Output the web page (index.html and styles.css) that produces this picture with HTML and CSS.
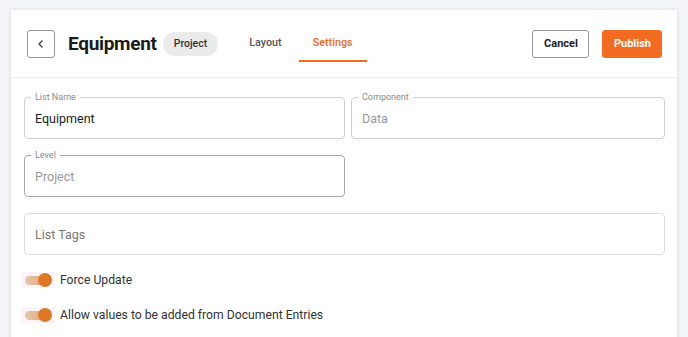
FILE: index.html
```html
<!DOCTYPE html>
<html lang="en">
<head>
    <meta charset="UTF-8">
    <meta name="viewport" content="width=device-width, initial-scale=1.0">
    <title>Equipment - Settings</title>
    <link rel="stylesheet" href="styles.css">
</head>
<body>
    <div class="card">
        <div class="header">
            <button class="back-button">
                <svg width="10" height="10" viewBox="0 0 10 10"><path d="M6.5 1.5 L3 5 L6.5 8.5" fill="none" stroke="#444" stroke-width="1.4"/></svg>
            </button>
            <h1 class="title">Equipment</h1>
            <span class="chip">Project</span>
            <div class="tabs">
                <a class="tab">Layout</a>
                <a class="tab active">Settings</a>
            </div>
            <div class="actions">
                <button class="button cancel">Cancel</button>
                <button class="button publish">Publish</button>
            </div>
        </div>

        <div class="content">
            <div class="field-grid">
                <div class="field">
                    <span class="field-label">List Name</span>
                    <span class="field-value">Equipment</span>
                </div>
                <div class="field">
                    <span class="field-label">Component</span>
                    <span class="field-value muted">Data</span>
                </div>
                <div class="field dark">
                    <span class="field-label">Level</span>
                    <span class="field-value muted">Project</span>
                </div>
            </div>

            <div class="field light">
                <span class="field-value placeholder">List Tags</span>
            </div>

            <div class="toggle-list">
                <div class="toggle-row">
                    <span class="toggle"><span class="track"></span><span class="knob"></span></span>
                    <span class="toggle-text">Force Update</span>
                </div>
                <div class="toggle-row">
                    <span class="toggle"><span class="track"></span><span class="knob"></span></span>
                    <span class="toggle-text">Allow values to be added from Document Entries</span>
                </div>
            </div>
        </div>
    </div>
</body>
</html>
```

FILE: styles.css
```css
body {
    font-family: Roboto, "Liberation Sans", sans-serif;
    background-color: #f3f5f8;
    margin: 0;
    padding: 10px 11px 0 11px;
    color: #222;
}
.card {
    background-color: white;
    box-shadow: 0 0 4px rgba(0, 0, 0, 0.12);
    height: 400px;
}
.header {
    display: flex;
    align-items: center;
    height: 67px;
    padding: 0 15px 0 16px;
    border-bottom: 1px solid #ececec;
}
.back-button {
    width: 28px;
    height: 28px;
    border: 1px solid #9a9a9a;
    border-radius: 3px;
    background: white;
    display: flex;
    align-items: center;
    justify-content: center;
    padding: 0;
    margin-right: 13px;
}
.title {
    font-size: 19px;
    font-weight: 700;
    margin: 0 6px 0 0;
    color: #1c1c1c;
    letter-spacing: -0.3px;
}
.chip {
    background-color: #ebebeb;
    border-radius: 12px;
    height: 24px;
    line-height: 24px;
    padding: 0 11px;
    font-size: 10.5px;
    font-weight: 500;
    color: #333;
}
.tabs {
    display: flex;
    gap: 3px;
    height: 100%;
    margin-left: 17px;
}
.tab {
    display: flex;
    align-items: center;
    padding: 0 14px 2px 14px;
    font-size: 10.8px;
    font-weight: 500;
    color: #555;
    height: 100%;
    box-sizing: border-box;
}
.tab.active {
    color: #f26b21;
    position: relative;
}
.tab.active::after {
    content: "";
    position: absolute;
    left: 0;
    right: 0;
    top: 50px;
    height: 2px;
    background-color: #f26b21;
}
.actions {
    margin-left: auto;
    display: flex;
    gap: 13px;
}
.button {
    height: 28px;
    font-family: inherit;
    font-size: 11px;
    font-weight: 700;
    border-radius: 3px;
    padding: 0 10px 0 11px;
}
.cancel {
    background: white;
    border: 1px solid #9a9a9a;
    color: #222;
}
.publish {
    background-color: #f26b21;
    border: 1px solid #f26b21;
    color: white;
}
.content {
    padding: 19px 12px 0 13px;
}
.field-grid {
    display: grid;
    grid-template-columns: 321px 314px;
    column-gap: 6px;
    row-gap: 16px;
    margin-bottom: 16px;
}
.field {
    position: relative;
    height: 42px;
    box-sizing: border-box;
    border: 1px solid #cfcfcf;
    border-radius: 4px;
    display: flex;
    align-items: center;
    padding-left: 10px;
}
.field.dark {
    border-color: #a9a9a9;
}
.field.light {
    border-color: #dcdcdc;
}
.field-label {
    position: absolute;
    top: -6px;
    left: 6px;
    padding: 0 4px;
    background: white;
    font-size: 9px;
    line-height: 11px;
    color: #8a8a8a;
}
.field-value {
    font-size: 12.5px;
    color: #222;
}
.field-value.muted {
    color: #999;
}
.field-value.placeholder {
    color: #777;
}
.toggle-list {
    padding-top: 7px;
}
.toggle-row {
    display: flex;
    align-items: center;
    height: 35px;
    font-size: 12.2px;
    color: #333;
}
.toggle {
    position: relative;
    width: 28px;
    height: 16px;
    margin-left: -3px;
    padding: 0 3px;
    background: rgba(255, 170, 210, 0.14);
}
.track {
    position: absolute;
    left: 4px;
    top: 4px;
    width: 22px;
    height: 9px;
    border-radius: 5px;
    background: linear-gradient(90deg, #dccda8, #f39a7c);
}
.knob {
    position: absolute;
    left: 17px;
    top: 1px;
    width: 14px;
    height: 14px;
    border-radius: 50%;
    background: radial-gradient(circle at 45% 55%, #e27624 40%, #b08a2c 100%);
}
.toggle-text {
    margin-left: 5px;
}
```
